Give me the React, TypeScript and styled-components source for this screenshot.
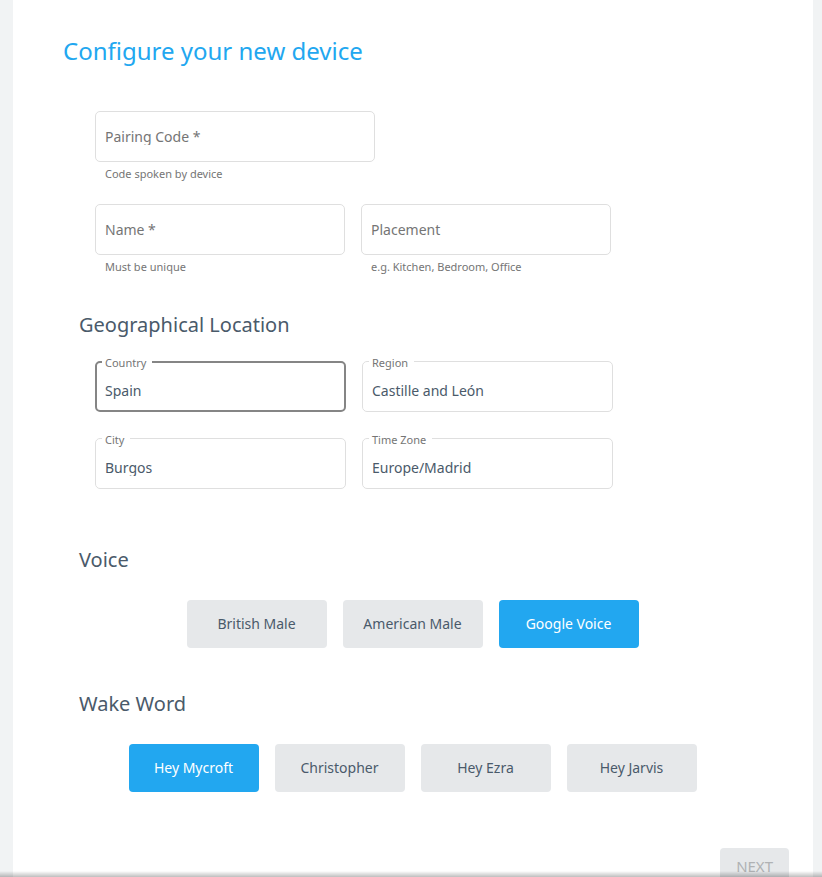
import React, { useState } from "react";
import styled, { createGlobalStyle } from "styled-components";

const ink = "#4a5a6a";
const muted = "#757575";
const blue = "#22a7f0";
const line = "#dfdfdf";

const GlobalStyle = createGlobalStyle`
  *, *::before, *::after { box-sizing: border-box; }
  body {
    margin: 0;
    background: #f1f3f4;
    color: ${ink};
    font-family: "Noto Sans", "Open Sans", sans-serif;
    font-size: 14px;
  }
  button, input { font: inherit; }
`;

const Page = styled.div`
  min-height: 100vh;
  padding: 0 9px 0 13px;
`;

const Card = styled.form`
  max-width: 800px;
  min-height: 100vh;
  margin: 0 auto;
  padding: 34px 24px 24px 50px;
  background: #fff;
`;

const Title = styled.h1`
  margin: 0;
  color: ${blue};
  font-size: 24px;
  font-weight: 400;
  line-height: 34px;
`;

const Section = styled.section<{ $gap: number }>`
  margin-top: ${(p) => p.$gap}px;
  padding: 0 42px 0 16px;
`;

const SectionTitle = styled.h2`
  margin: 0;
  font-size: 20px;
  font-weight: 400;
  line-height: 32px;
`;

const FieldRow = styled.div<{ $gap: number }>`
  display: flex;
  flex-wrap: wrap;
  gap: 16px;
  margin-top: ${(p) => p.$gap}px;
  padding-left: 16px;
`;

const Field = styled.div<{ $width: number }>`
  flex: 0 1 ${(p) => p.$width}px;
`;

const EmptyBox = styled.div`
  display: flex;
  align-items: center;
  height: 51px;
  padding: 0 9px;
  border: 1px solid ${line};
  border-radius: 5px;
`;

const TextInput = styled.input`
  display: block;
  width: 100%;
  height: 16px;
  padding: 0;
  border: 0;
  outline: 0;
  background: transparent;
  color: ${ink};
  line-height: 16px;
  overflow: hidden;

  &::placeholder {
    color: ${muted};
    opacity: 1;
  }
`;

const Hint = styled.p`
  margin: 0;
  padding: 4px 10px 0;
  color: ${muted};
  font-size: 11px;
  line-height: 16px;
`;

const Outline = styled.fieldset<{ $active?: boolean }>`
  min-width: 0;
  height: 59px;
  margin: 0;
  padding: ${(p) => (p.$active ? "12px 8px 0" : "13px 9px 0")};
  border: ${(p) => (p.$active ? "2px solid #858585" : `1px solid ${line}`)};
  border-radius: 5px;
`;

const Legend = styled.legend<{ $active?: boolean }>`
  height: ${(p) => (p.$active ? 18 : 17)}px;
  margin-left: -3px;
  padding: 2px 6px 0 3px;
  color: ${muted};
  font-size: 11px;
  line-height: 16px;
`;

const Choices = styled.div`
  display: flex;
  flex-wrap: wrap;
  justify-content: center;
  gap: 16px;
  margin-top: 24px;
`;

const Choice = styled.button<{ $width: number }>`
  width: ${(p) => p.$width}px;
  height: 48px;
  padding: 0 1px 2px 0;
  border: 0;
  border-radius: 4px;
  background: #e6e8ea;
  color: ${ink};
  cursor: pointer;

  &[aria-pressed="true"] {
    background: ${blue};
    color: #fff;
  }
`;

const Actions = styled.div`
  display: flex;
  justify-content: flex-end;
  margin-top: 56px;
`;

const NextButton = styled.button`
  height: 36px;
  padding: 0 16px 1px;
  border: 0;
  border-radius: 4px;
  background: #e6e8ea;
  color: #b0b2b4;
  font-size: 15px;
`;

const BottomShade = styled.div`
  position: fixed;
  inset: auto 0 0;
  height: 6px;
  background: linear-gradient(rgba(0, 0, 0, 0), rgba(0, 0, 0, 0.25));
  pointer-events: none;
`;

type EmptyFieldProps = { id: string; label: string; hint: string; width: number };

function EmptyField({ id, label, hint, width }: EmptyFieldProps) {
  return (
    <Field $width={width}>
      <EmptyBox>
        <TextInput id={id} placeholder={label} aria-label={label} aria-describedby={`${id}-hint`} />
      </EmptyBox>
      <Hint id={`${id}-hint`}>{hint}</Hint>
    </Field>
  );
}

type FilledFieldProps = { id: string; label: string; value: string; active?: boolean };

function FilledField({ id, label, value, active }: FilledFieldProps) {
  return (
    <Field $width={251}>
      <Outline $active={active}>
        <Legend $active={active}>
          <label htmlFor={id}>{label}</label>
        </Legend>
        <TextInput id={id} defaultValue={value} />
      </Outline>
    </Field>
  );
}

type ChoiceGroupProps = { label: string; options: string[]; initial: string; width: number };

function ChoiceGroup({ label, options, initial, width }: ChoiceGroupProps) {
  const [selected, setSelected] = useState(initial);
  return (
    <Choices role="group" aria-label={label}>
      {options.map((option) => (
        <Choice
          key={option}
          type="button"
          $width={width}
          aria-pressed={option === selected}
          onClick={() => setSelected(option)}
        >
          {option}
        </Choice>
      ))}
    </Choices>
  );
}

export default function App() {
  return (
    <>
      <GlobalStyle />
      <Page>
        <Card>
          <Title>Configure your new device</Title>
          <Section $gap={43}>
            <FieldRow $gap={0}>
              <EmptyField id="pairing" label="Pairing Code *" hint="Code spoken by device" width={280} />
            </FieldRow>
            <FieldRow $gap={22}>
              <EmptyField id="name" label="Name *" hint="Must be unique" width={250} />
              <EmptyField id="placement" label="Placement" hint="e.g. Kitchen, Bedroom, Office" width={250} />
            </FieldRow>
          </Section>
          <Section $gap={34}>
            <SectionTitle>Geographical Location</SectionTitle>
            <FieldRow $gap={12}>
              <FilledField id="country" label="Country" value="Spain" active />
              <FilledField id="region" label="Region" value="Castille and León" />
            </FieldRow>
            <FieldRow $gap={18}>
              <FilledField id="city" label="City" value="Burgos" />
              <FilledField id="timezone" label="Time Zone" value="Europe/Madrid" />
            </FieldRow>
          </Section>
          <Section $gap={55}>
            <SectionTitle>Voice</SectionTitle>
            <ChoiceGroup
              label="Voice"
              options={["British Male", "American Male", "Google Voice"]}
              initial="Google Voice"
              width={140}
            />
          </Section>
          <Section $gap={40}>
            <SectionTitle>Wake Word</SectionTitle>
            <ChoiceGroup
              label="Wake Word"
              options={["Hey Mycroft", "Christopher", "Hey Ezra", "Hey Jarvis"]}
              initial="Hey Mycroft"
              width={130}
            />
          </Section>
          <Actions>
            <NextButton type="submit" disabled>
              NEXT
            </NextButton>
          </Actions>
        </Card>
      </Page>
      <BottomShade />
    </>
  );
}
